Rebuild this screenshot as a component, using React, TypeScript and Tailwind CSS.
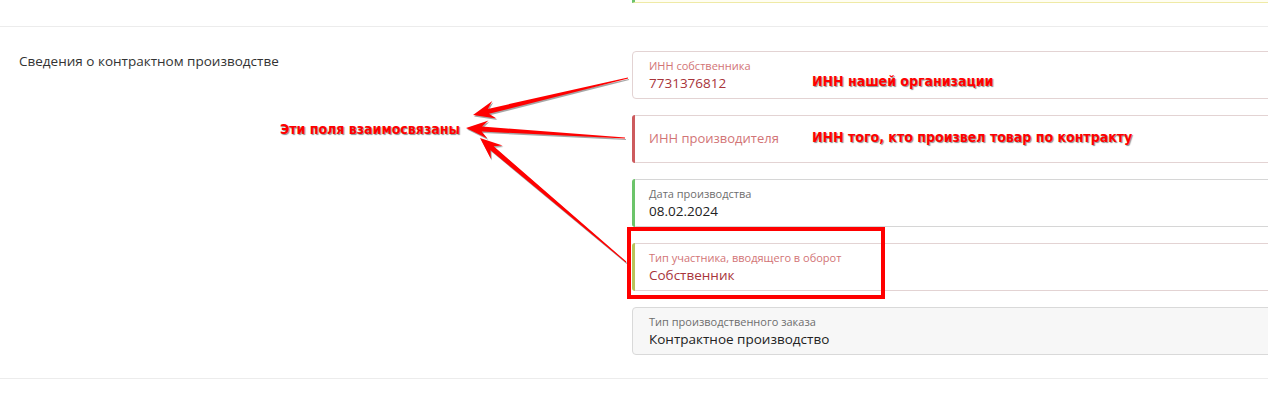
type Pt = [number, number];

// tapered arrow: thin tail, thick neck, swept-back head
function arrowPoints(tail: Pt, tip: Pt, headLen = 22, headW = 9, neckW = 5, tailW = 1): string {
  const dx = tip[0] - tail[0];
  const dy = tip[1] - tail[1];
  const len = Math.hypot(dx, dy);
  const ux = dx / len;
  const uy = dy / len;
  const nx = -uy;
  const ny = ux;
  const at = (d: number, off: number): Pt => [tip[0] - ux * d + nx * off, tip[1] - uy * d + ny * off];
  const pts: Pt[] = [
    tip,
    at(headLen, headW),
    at(headLen * 0.72, neckW / 2),
    [tail[0] + nx * (tailW / 2), tail[1] + ny * (tailW / 2)],
    [tail[0] - nx * (tailW / 2), tail[1] - ny * (tailW / 2)],
    at(headLen * 0.72, -neckW / 2),
    at(headLen, -headW),
  ];
  return pts.map((p) => `${p[0].toFixed(1)},${p[1].toFixed(1)}`).join(' ');
}

const ARROWS: { tail: Pt; tip: Pt }[] = [
  { tail: [628, 78], tip: [473, 115] },
  { tail: [625, 138], tip: [466, 128] },
  { tail: [626, 262], tip: [480, 138] },
];

interface FieldProps {
  label: string;
  value?: string;
  accent?: string;
  tone: 'error' | 'normal' | 'disabled';
}

function Field({ label, value, accent, tone }: FieldProps) {
  const box =
    tone === 'disabled'
      ? 'bg-[#f7f7f7] border border-[#d9d9d9]'
      : tone === 'error'
        ? 'bg-white border border-[#e3d3d3]'
        : 'bg-white border border-[#d6d6d6]';
  const labelColor = tone === 'error' ? 'text-[#d27476]' : 'text-[#6e6e6e]';
  const valueColor = tone === 'error' ? 'text-[#a8343a]' : 'text-[#222]';

  return (
    <div className={`relative h-[48px] rounded-[4px] ${box}`}>
      {accent && <div className={`absolute -left-px -top-px -bottom-px w-[3px] rounded-l-[3px] ${accent}`} />}
      {value === undefined ? (
        <div className={`h-full flex items-center pl-[16px] text-[13px] ${labelColor}`}>{label}</div>
      ) : (
        <div className="pl-[16px] pt-[7px]">
          <div className={`text-[11px] leading-[14px] ${labelColor}`}>{label}</div>
          <div className={`text-[13.5px] leading-[21px] ${valueColor}`}>{value}</div>
        </div>
      )}
    </div>
  );
}

export default function App() {
  return (
    <div className="relative w-[1268px] h-[406px] overflow-hidden bg-white font-['Open_Sans',sans-serif]">
      {/* tail of the previous field */}
      <div className="ml-[632px] w-[660px] h-[3px] bg-[#fffef2] border-b border-[#efeaa6] border-l-[3px] border-l-[#6cc36c]" />

      <div className="mt-[23px] border-t border-[#ececec] border-b">
        <div className="flex pt-[24px] pb-[23px]">
          <div className="w-[632px] shrink-0 pl-[19px] pt-[1px] text-[13.5px] leading-[18px] text-[#333]">
            Сведения о контрактном производстве
          </div>
          <div className="w-[660px] shrink-0 flex flex-col gap-[16px]">
            <Field tone="error" label="ИНН собственника" value="7731376812" />
            <Field tone="error" label="ИНН производителя" accent="bg-[#cd5b5e]" />
            <Field tone="normal" label="Дата производства" value="08.02.2024" accent="bg-[#6cc46a]" />
            <Field tone="error" label="Тип участника, вводящего в оборот" value="Собственник" accent="bg-[#b9c45c]" />
            <Field tone="disabled" label="Тип производственного заказа" value="Контрактное производство" />
          </div>
        </div>
      </div>

      {/* annotations */}
      <div className="absolute inset-0 pointer-events-none font-['Liberation_Sans_Narrow','DejaVu_Sans_Condensed',sans-serif] font-bold text-[14px] leading-[18px] text-[#ff0000] [text-shadow:1px_1px_1px_rgba(0,0,0,0.45)]">
        <div className="absolute left-[812px] top-[72px]">ИНН нашей организации</div>
        <div className="absolute left-[812px] top-[128px]">ИНН того, кто произвел товар по контракту</div>
        <div className="absolute left-[280px] top-[120px]">Эти поля взаимосвязаны</div>
      </div>
      <div className="absolute left-[627px] top-[227px] w-[258px] h-[72px] border-[4px] border-[#ff0000] pointer-events-none" />
      <svg className="absolute inset-0 pointer-events-none" width="1268" height="406" viewBox="0 0 1268 406">
        {ARROWS.map((a, i) => (
          <g key={i}>
            <polygon points={arrowPoints([a.tail[0] + 1, a.tail[1] + 1.5], [a.tip[0] + 1, a.tip[1] + 1.5])} fill="rgba(0,0,0,0.35)" />
            <polygon points={arrowPoints(a.tail, a.tip)} fill="#ff0000" />
          </g>
        ))}
      </svg>
    </div>
  );
}
